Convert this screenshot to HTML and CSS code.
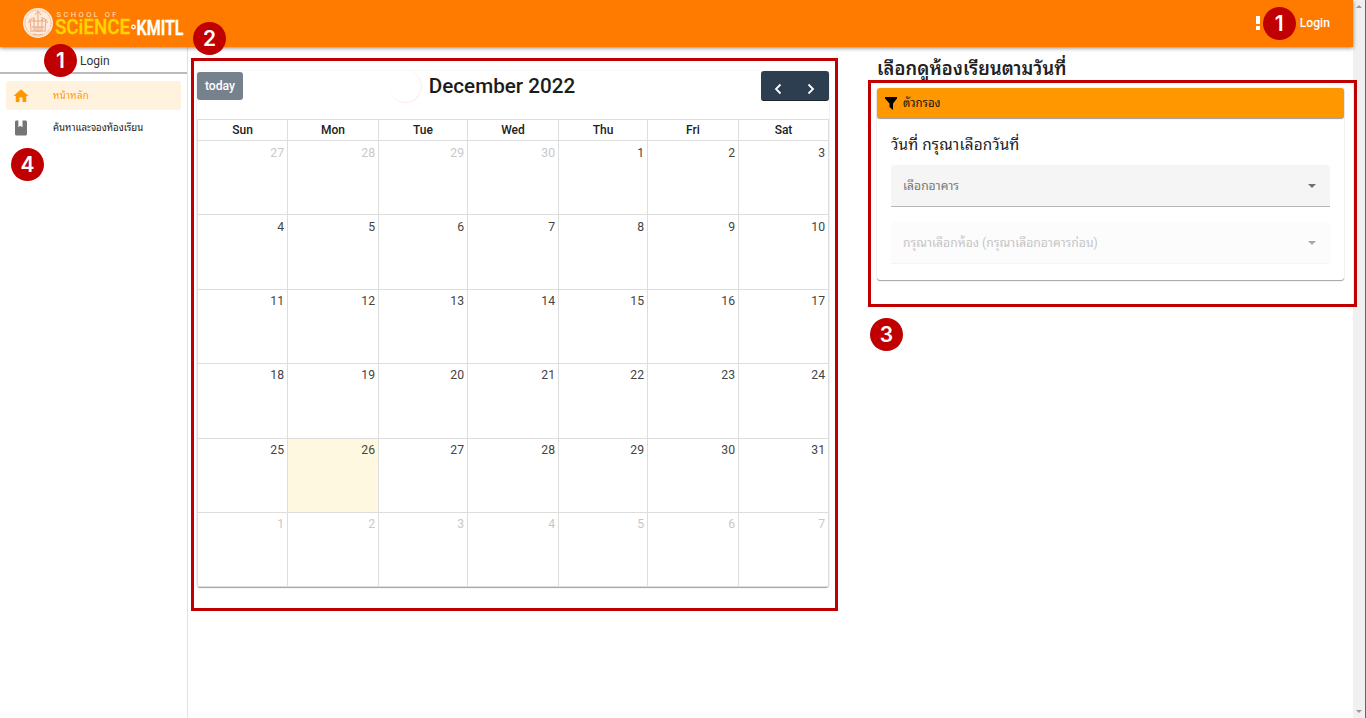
FILE: index.html
```html
<!DOCTYPE html>
<html lang="th">
<head>
<meta charset="utf-8">
<title>School of Science KMITL</title>
<link rel="stylesheet" href="styles.css">
</head>
<body>
<div class="window">
  <div class="app">
    <header class="toolbar">
      <svg class="logo" width="190" height="42" viewBox="0 0 190 42">
        <circle cx="18" cy="20" r="15" fill="#fdebdc"/>
        <g fill="none" stroke="#e8a077">
          <circle cx="18" cy="20" r="13" stroke-dasharray="1.5 1" stroke-width=".8"/>
          <path d="M18 9v20M14 14v14M22 14v14M10 16l1 11M26 16l-1 11M10 28h16M12 24h12M15 12l3-4 3 4M11 18h14" stroke-width=".9"/>
          <path d="M8 20l4-5 3 3M28 20l-4-5-3 3M16 24v5M20 24v5M13 31q5 2 10 0" stroke-width=".8"/>
        </g>
        <text class="logo-small" x="36.500" y="14" textLength="60">SCHOOL OF</text>
        <text class="logo-sci" x="35" y="31" textLength="75" lengthAdjust="spacingAndGlyphs">SCiENCE</text>
        <circle cx="113.500" cy="24" r="1.800" fill="none" stroke="#fff" stroke-width="1.300"/>
        <text class="logo-kmitl" x="116.500" y="31.500" textLength="47" lengthAdjust="spacingAndGlyphs">KMITL</text>
      </svg>
      <div class="toolbar-login">
        <svg width="4" height="14" viewBox="0 0 4 14"><path d="M0 0h4v8H0zM0 10h4v4H0z" fill="#fff"/></svg>
        <span class="badge">1</span>
        <span class="toolbar-text">Login</span>
      </div>
    </header>
    <div class="body">
      <nav class="sidebar">
        <div class="side-login"><span class="badge">1</span><span>Login</span></div>
        <a class="item active">
          <svg width="18" height="18" viewBox="0 0 24 24"><path fill="#ff9800" d="M10 20v-6h4v6h5v-8h3L12 3 2 12h3v8z"/></svg>
          <span class="t-home">หน้าหลัก</span>
        </a>
        <a class="item">
          <svg width="18" height="18" viewBox="0 0 24 24"><path fill="#757575" d="M18 2h-4v9l-3-2-2.500 2V2H6C4.900 2 4 2.900 4 4v16c0 1.100.9 2 2 2h12c1.100 0 2-.9 2-2V4c0-1.100-.9-2-2-2z"/></svg>
          <span class="t-find">ค้นหาและจองห้องเรียน</span>
        </a>
        <span class="badge four">4</span>
      </nav>
      <main class="content">
        <section class="calendar">
          <div class="cal-head">
            <button class="today">today</button>
            <div class="title"><i class="ghost"></i><h2>December 2022</h2></div>
            <div class="nav">
              <svg width="8" height="12" viewBox="0 0 8 12"><path d="M6.500 1.500L2 6l4.500 4.500"/></svg>
              <svg width="8" height="12" viewBox="0 0 8 12"><path d="M1.500 1.500L6 6l-4.500 4.500"/></svg>
            </div>
          </div>
          <div class="grid">
            <b>Sun</b><b>Mon</b><b>Tue</b><b>Wed</b><b>Thu</b><b>Fri</b><b>Sat</b>
            <span class="off">27</span><span class="off">28</span><span class="off">29</span><span class="off">30</span><span>1</span><span>2</span><span>3</span>
            <span>4</span><span>5</span><span>6</span><span>7</span><span>8</span><span>9</span><span>10</span>
            <span>11</span><span>12</span><span>13</span><span>14</span><span>15</span><span>16</span><span>17</span>
            <span>18</span><span>19</span><span>20</span><span>21</span><span>22</span><span>23</span><span>24</span>
            <span>25</span><span class="now">26</span><span>27</span><span>28</span><span>29</span><span>30</span><span>31</span>
            <span class="off">1</span><span class="off">2</span><span class="off">3</span><span class="off">4</span><span class="off">5</span><span class="off">6</span><span class="off">7</span>
          </div>
        </section>
        <section class="rooms">
          <h3><span class="t-head">เลือกดูห้องเรียนตามวันที่</span></h3>
          <div class="card">
            <div class="card-head">
              <svg width="12" height="13" viewBox="0 0 12 13"><path d="M0 0h12v1.500L8 6.500V13L4.500 10V6.500L0 1.500z"/></svg>
              <span class="t-filter">ตัวกรอง</span>
            </div>
            <div class="card-body">
              <div class="date"><span class="t-date">วันที่ กรุณาเลือกวันที่</span></div>
              <div class="select"><span class="t-build">เลือกอาคาร</span><i class="caret"></i></div>
              <div class="select disabled"><span class="t-room">กรุณาเลือกห้อง (กรุณาเลือกอาคารก่อน)</span><i class="caret"></i></div>
            </div>
          </div>
        </section>
      </main>
    </div>
  </div>
  <div class="scrollbar"><i class="up"></i><i class="down"></i></div>
  <div class="mark mark-cal"></div>
  <div class="mark mark-filter"></div>
  <span class="badge two">2</span>
  <span class="badge three">3</span>
</div>
</body>
</html>
```
FILE: styles.css
```css
* { box-sizing: border-box; }
body { margin: 0; background: #fff; color: #212121; font: 12px Roboto, "Noto Sans Thai Looped", Loma, Waree, Tahoma, "Noto Sans Thai", sans-serif; }
h2, h3 { margin: 0; font-weight: 500; }
.window { position: relative; display: flex; width: 1366px; height: 718px; overflow: hidden; }
.window span { white-space: nowrap; }
.app { width: 1353px; display: flex; flex-direction: column; }
.toolbar { height: 47px; flex: none; display: flex; justify-content: space-between; padding: 3px 23px 0 20px; background: #ff7b00; color: #fff; box-shadow: 0 1px 4px rgba(0,0,0,.5); z-index: 1; }
.logo { overflow: visible; }
.logo-small { font: 7.500px Roboto, sans-serif; fill: #ffe3c6; }
.logo-sci { font: 500 20px Roboto, sans-serif; fill: #ffd500; stroke: #ffd500; stroke-width: .3px; }
.logo-kmitl { font: 600 20px Roboto, sans-serif; fill: #fff; stroke: #fff; stroke-width: .4px; }
.toolbar-login { display: flex; align-items: center; height: 40px; }
.toolbar-login .badge { margin: 0 4px 0 3px; }
.toolbar-text { font-weight: 500; font-size: 12.200px; }
.badge { display: flex; align-items: center; justify-content: center; width: 33px; height: 33px; flex: none; border-radius: 50%; background: #c00000; color: #fff; font: 600 21px Inter, sans-serif; }
.body { display: flex; flex: 1; }
.sidebar { width: 188px; border-right: 1px solid #e2e2e2; }
.side-login { height: 27px; border-bottom: 2px solid #bababa; display: flex; align-items: center; padding: 2px 0 0 44px; gap: 3px; font-size: 12px; color: #333; }
.side-login .badge { position: relative; z-index: 2; }
.item { display: flex; align-items: center; height: 29px; margin: 7px 6px 0; padding-left: 6px; gap: 23px; font-size: 9.650px; border-radius: 3px; }
.item span { margin-top: -3px; }
.item + .item { margin-top: 3px; }
.t-home { letter-spacing: .3px; }
.active { background: #fff3e0; color: #ff9800; }
.four { margin: 6px 0 0 11px; }
.content { flex: 1; display: flex; gap: 48px; padding: 24px 9px 0 9px; }
.calendar { width: 632px; height: 516px; border-radius: 3px; box-shadow: 0 1px 1px rgba(0,0,0,.35), 0 0 1px rgba(0,0,0,.2); }
.cal-head { height: 48px; display: flex; justify-content: space-between; align-items: flex-start; }
.today { width: 46px; height: 28px; margin-top: 1px; border: 0; border-radius: 3px; padding: 0 0 1px; background: #75818d; color: #fff; font: 500 12.200px Roboto, sans-serif; }
.title { display: flex; align-items: center; height: 30px; gap: 7px; margin-right: 40px; }
.ghost { width: 33px; height: 33px; border-radius: 50%; border-right: 1px solid #fdeaea; border-bottom: 1px solid #fdeaea; }
h2 { font-size: 20.650px; line-height: 30px; color: #1c1c1c; }
.nav { width: 68px; height: 30px; border-radius: 3px; background: #2c3e50; border-bottom: 1px solid #1a252f; display: flex; justify-content: center; gap: 25px; padding: 12px 0 0 0; }
.nav path { fill: none; stroke: #fff; stroke-width: 1.800; }
.grid { display: grid; grid-template-columns: 91px 91px 89px 91px 89px 91px 90px; grid-template-rows: 22px 74px 75px 74px 75px 74px 74px; }
.grid b, .grid span { border: solid #ddd; border-width: 0 1px 1px 0; text-align: right; padding: 3px 3px; line-height: 16px; }
.grid span { font-size: 12.200px; color: #444; }
.grid span:nth-child(-n+21) { padding-top: 4px; }
.grid b { text-align: center; font-weight: 500; border-top-width: 1px; padding: 2px 0; font-size: 12px; }
.grid > :nth-child(7n+1) { border-left-width: 1px; }
.grid .off { color: #c8c8c8; }
.grid .now { background: #fff8e0; }
.rooms { width: 467px; }
h3 { height: 17px; font-size: 18.200px; line-height: 0; font-weight: 600; }
.t-head { position: relative; top: -2px; letter-spacing: .13px; }
.card { height: 192px; border-radius: 3px; box-shadow: 0 1px 1px rgba(0,0,0,.35), 0 0 1px rgba(0,0,0,.25); }
.card-head { height: 30px; display: flex; align-items: center; gap: 6px; padding-left: 8px; background: #ff9800; border-radius: 3px; box-shadow: 0 1px 1px rgba(0,0,0,.4); font-size: 11.400px; color: #111; }
.card-head span { margin-top: -3px; }
.card-body { padding: 15px 14px 0 14px; }
.date { height: 32px; line-height: 24px; font-size: 15.300px; letter-spacing: .15px; }
.select { height: 42px; display: flex; align-items: center; justify-content: space-between; padding: 0 14px 0 12px; background: #f5f5f5; border-bottom: 1px solid #b5b5b5; border-radius: 3px 3px 0 0; color: #777; font-size: 12.150px; }
.select span { margin-top: -2px; }
.disabled { margin-top: 15px; background: #fcfcfc; border-bottom: 1px dotted #eee; color: #c5c5c5; }
.caret { border: 4px solid transparent; border-top-color: #707070; border-bottom: 0; }
.disabled .caret { border-top-color: #aaa; }
.scrollbar { width: 13px; background: #f0f0f0; border-right: 1px solid #666; display: flex; flex-direction: column; justify-content: space-between; align-items: center; padding: 5px 0; }
.up, .down { border: 3px solid transparent; }
.up { border-bottom-color: #999; border-top: 0; }
.down { border-top-color: #999; border-bottom: 0; }
.mark { position: absolute; border: 3px solid #c00000; z-index: 2; }
.mark-cal { left: 191px; top: 58px; width: 647px; height: 553px; }
.mark-filter { left: 868px; top: 80px; width: 489px; height: 227px; }
.two, .three { position: absolute; z-index: 3; }
.two { left: 193px; top: 22px; }
.three { left: 870px; top: 318px; }
```
